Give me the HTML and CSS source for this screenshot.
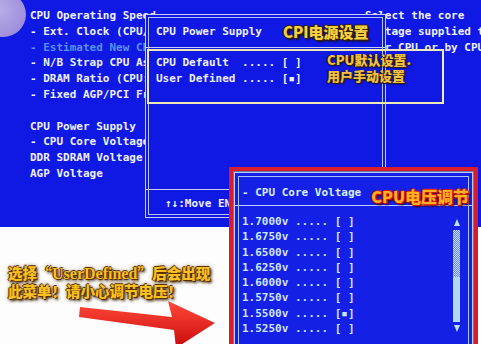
FILE: index.html
```html
<!DOCTYPE html>
<html lang="zh">
<head>
<meta charset="utf-8">
<title>CPU Core Voltage</title>
<link rel="stylesheet" href="styles.css">
</head>
<body>
<div class="screen">
  <div class="bios">
    <div class="blob"></div>
    <div class="menu">
      <div class="ln">CPU Operating Speed</div>
      <div class="ln">- Ext. Clock (CPU/PCI)</div>
      <div class="ln dim">- Estimated New CPU Clock</div>
      <div class="ln">- N/B Strap CPU As</div>
      <div class="ln">- DRAM Ratio (CPU:DRAM)</div>
      <div class="ln">- Fixed AGP/PCI Frequency</div>
      <div class="ln"> </div>
      <div class="ln">CPU Power Supply</div>
      <div class="ln">- CPU Core Voltage</div>
      <div class="ln">DDR SDRAM Voltage</div>
      <div class="ln">AGP Voltage</div>
    </div>
    <div class="help">
      <div class="ln">Select the core</div>
      <div class="ln">Voltage supplied to</div>
      <div class="ln">Your CPU or by CPU</div>
    </div>

    <div class="popup">
      <div class="p-head ln">CPU Power Supply</div>
      <div class="p-body">
        <div class="ln">CPU Default  ..... [ ]</div>
        <div class="ln">User Defined ..... [&#9642;]</div>
      </div>
      <div class="p-foot ln">&uarr;&darr;:Move ENTER:Accept ESC:Abort</div>
    </div>
    <div class="label label-supply">CPI电源设置</div>
    <div class="ybox">
      <div class="ylabel">CPU默认设置.</div>
      <div class="ylabel">用户手动设置</div>
    </div>
  </div>

  <div class="note">
    <div>选择<span class="q">“</span><span class="lat">UserDefined</span><span class="q">”</span>后会出现</div>
    <div>此菜单！请小心调节电压！</div>
  </div>

  <svg class="arrow" width="150" height="60" viewBox="70 290 150 60">
    <defs>
      <linearGradient id="ag" x1="0" y1="0" x2="0" y2="1">
        <stop offset="0" stop-color="#ff4a3a"/>
        <stop offset="1" stop-color="#c80a0a"/>
      </linearGradient>
    </defs>
    <polygon fill="url(#ag)" points="80,307 172,317 168,301 215,323 176,348 174,330 79,317"/>
  </svg>

  <div class="zoom">
    <div class="zwin">
      <div class="z-head">
        <span class="ln">- CPU Core Voltage</span>
        <span class="label label-core">CPU电压调节</span>
      </div>
      <div class="z-body">
        <div class="z-list">
          <div class="ln">1.7000v ..... [ ]</div>
          <div class="ln">1.6750v ..... [ ]</div>
          <div class="ln">1.6500v ..... [ ]</div>
          <div class="ln">1.6250v ..... [ ]</div>
          <div class="ln">1.6000v ..... [ ]</div>
          <div class="ln">1.5750v ..... [ ]</div>
          <div class="ln">1.5500v ..... [&#9642;]</div>
          <div class="ln">1.5250v ..... [ ]</div>
        </div>
        <div class="scroll">
          <div class="tri-up"></div>
          <div class="track"></div>
          <div class="thumb"></div>
          <div class="tri-down"></div>
        </div>
      </div>
    </div>
  </div>
</div>
</body>
</html>
```
FILE: styles.css
```css
* { box-sizing: border-box; }
html, body { margin: 0; padding: 0; }
body {
  width: 481px;
  height: 344px;
  overflow: hidden;
  background: #fff;
}
.screen {
  position: relative;
  width: 481px;
  height: 344px;
  overflow: hidden;
  background: #fdfdfd;
}
.ln { white-space: pre; }
.bios {
  position: relative;
  height: 227px;
  background: #1018e4;
  display: flex;
  font-family: "DejaVu Sans Mono", "Liberation Mono", monospace;
  font-weight: bold;
  font-size: 11px;
  line-height: 15.8px;
  color: #eef0ff;
  overflow: hidden;
}
.blob {
  position: absolute;
  left: -20px;
  top: -8px;
  width: 46px;
  height: 45px;
  border-radius: 50%;
  background: radial-gradient(circle at 40% 40%, #d8c8ec 0, #c0acdc 55%, #a898d8 100%);
  opacity: 0.85;
  z-index: 1;
}
.menu {
  width: 365px;
  flex: none;
  padding: 8px 0 0 30px;
  overflow: hidden;
}
.menu .dim { color: #5a90f0; }
.help {
  flex: 1;
  padding-top: 8px;
  overflow: hidden;
}
.popup {
  position: absolute;
  z-index: 2;
  left: 145px;
  top: 14px;
  width: 241px;
  height: 204px;
  border: 1px solid #c8d0f4;
  box-shadow: inset 0 0 0 2px #1018e4, inset 0 0 0 3px #b8c2ee;
  background: #1018e4;
  display: flex;
  flex-direction: column;
  padding: 0 3px;
  overflow: hidden;
}
.p-head {
  height: 33px;
  padding: 9px 0 0 10px;
  border-bottom: 1px solid #c8d0f4;
  margin: 0 -3px;
}
.p-body {
  flex: 1;
  padding: 7px 0 0 7px;
}
.p-foot {
  height: 28px;
  border-top: 1px solid #c8d0f4;
  margin: 0 -3px;
  padding: 6px 0 0 19px;
}
.label {
  font-family: "Noto Sans CJK SC", sans-serif;
  font-weight: 900;
  white-space: nowrap;
}
.label-supply {
  position: absolute;
  z-index: 4;
  left: 283px;
  top: 22px;
  font-size: 15px;
  line-height: 20px;
  color: #f6d040;
  text-shadow: 1px 1px 0 #3a2400, -1px 0 0 #3a2400, 0 -1px 0 #3a2400, 1px 0 1px #000, 2px 2px 2px #201000;
}
.ybox {
  position: absolute;
  z-index: 3;
  left: 147px;
  top: 49px;
  width: 297px;
  height: 55px;
  border: 2px solid #eeeab8;
  padding: 1px 0 0 178px;
}
.ylabel {
  font-family: "Noto Sans CJK SC", sans-serif;
  font-weight: 900;
  font-size: 13px;
  line-height: 16px;
  color: #f0c048;
  white-space: nowrap;
  text-shadow: 1px 1px 0 #302000, -1px 0 0 #302000, 1px 1px 2px #000;
}
.note {
  padding: 37px 0 0 8px;
  font-family: "Noto Sans CJK SC", sans-serif;
  font-weight: 900;
  font-size: 14.5px;
  line-height: 17px;
  color: #f8c020;
  text-shadow: 1px 1px 0 #5a3000, -1px 0 0 #5a3000, 0 -1px 0 #5a3000, 2px 2px 3px #3a2000, 0 0 4px #6a4a20;
  white-space: nowrap;
}
.note .q {
  display: inline-block;
  width: 15px;
  text-align: center;
}
.note .lat {
  font-family: "Liberation Serif", serif;
  font-weight: bold;
  font-size: 16px;
}
.arrow {
  position: absolute;
  left: 70px;
  top: 290px;
}
.zoom {
  position: absolute;
  z-index: 5;
  left: 229px;
  top: 167px;
  width: 249px;
  height: 200px;
  border: 4px solid #d81c30;
  background: #6a78a8;
  padding: 1px;
}
.zwin {
  height: 100%;
  background: #1420e6;
  border: 1px solid #b8d0f8;
  box-shadow: inset 0 0 0 3px #1420e6, inset 0 0 0 4px #a8c4f4;
  font-family: "DejaVu Sans Mono", "Liberation Mono", monospace;
  font-weight: bold;
  font-size: 11px;
  color: #d8ecff;
}
.z-head {
  height: 33px;
  border-bottom: 1px solid #b8d0f8;
  padding: 8px 0 0 7px;
  display: flex;
  align-items: center;
  gap: 10px;
  line-height: 16px;
}
.label-core {
  font-size: 16px;
  line-height: 20px;
  margin-top: 6px;
  color: #ffb020;
  text-shadow: 1px 0 0 #d01010, -1px 0 0 #d01010, 0 1px 0 #d01010, 0 -1px 0 #d01010, 1px 1px 0 #c00, 2px 2px 2px #400000;
}
.z-body {
  display: grid;
  grid-template-columns: 1fr 7px;
  align-items: start;
  padding: 8px 12px 0 7px;
}
.z-list {
  line-height: 15.3px;
  color: #cfe6ff;
}
.scroll {
  display: flex;
  flex-direction: column;
  align-items: center;
  padding-top: 5px;
}
.tri-up, .tri-down {
  width: 0;
  height: 0;
  border-left: 3.5px solid transparent;
  border-right: 3.5px solid transparent;
}
.tri-up { border-bottom: 7px solid #c0e0fa; }
.tri-down { border-top: 7px solid #c0e0fa; margin-top: 3px; }
.track {
  width: 7px;
  height: 47px;
  margin-top: 4px;
  background: repeating-conic-gradient(#c0dcf4 0 25%, #6a88e4 0 50%) 0 0 / 2px 2px;
}
.thumb {
  width: 7px;
  height: 45px;
  background: #b0dcf2;
}
```
